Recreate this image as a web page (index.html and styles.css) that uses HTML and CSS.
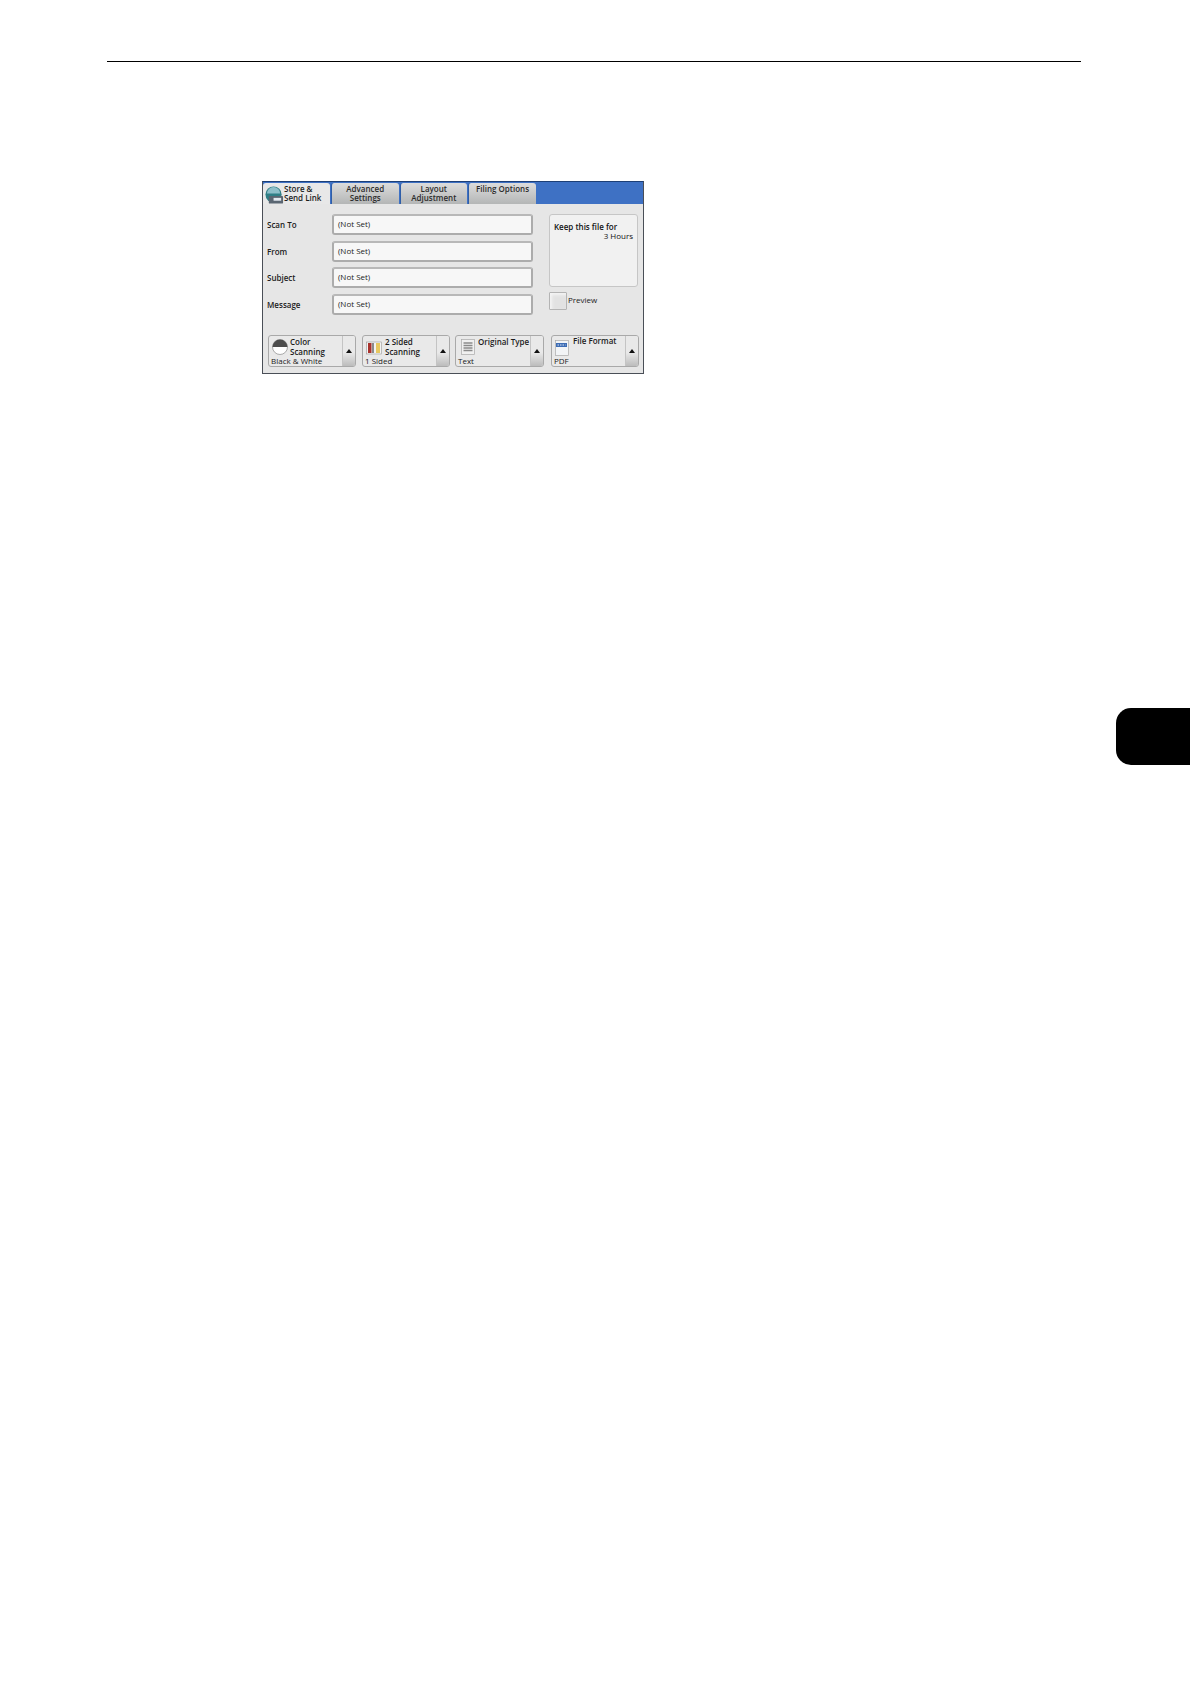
FILE: index.html
```html
<!DOCTYPE html>
<html lang="en">
<head>
<meta charset="utf-8">
<title>Store &amp; Send Link</title>
<link rel="stylesheet" href="styles.css">
</head>
<body>
<div class="rule"></div>
<div class="panel">
  <div class="tabbar">
    <div class="tab tab-active">
      <svg class="tab-icon" viewBox="0 0 20 20"><circle cx="9" cy="9" r="8.5" fill="#2f7f86"/><path d="M2 8a7 7 0 0 1 14 0z" fill="#8dbfc9"/><rect x="4" y="10.5" width="15" height="8" rx="1" fill="#5a6672"/><rect x="9" y="12.5" width="8" height="3" fill="#e4eaf0"/></svg>
      <span class="tab-text-left">Store &amp;<br>Send Link</span>
    </div>
    <div class="tab tab-2">Advanced<br>Settings</div>
    <div class="tab tab-3">Layout<br>Adjustment</div>
    <div class="tab tab-4">Filing Options</div>
  </div>
  <div class="body">
    <div class="top">
      <div class="fields">
        <div class="row"><span class="label">Scan To</span><div class="input">(Not Set)</div></div>
        <div class="row"><span class="label">From</span><div class="input">(Not Set)</div></div>
        <div class="row"><span class="label">Subject</span><div class="input">(Not Set)</div></div>
        <div class="row"><span class="label">Message</span><div class="input">(Not Set)</div></div>
      </div>
      <div class="side">
        <div class="keep">
          <div class="keep-a">Keep this file for</div>
          <div class="keep-b">3 Hours</div>
        </div>
        <div class="preview"><span class="check"></span><span class="preview-text">Preview</span></div>
      </div>
    </div>
    <div class="buttons">
      <div class="btn b1">
        <div class="btn-main">
          <svg class="ic-color" viewBox="0 0 16 16"><circle cx="8" cy="8" r="7.5" fill="#fff" stroke="#777" stroke-width=".6"/><path d="M.5 8a7.5 7.5 0 0 1 15 0z" fill="#4d4d4d"/></svg>
          <div class="btn-title t-color">Color<br><span class="ind">Scanning</span></div>
          <div class="btn-value">Black &amp; White</div>
        </div>
        <div class="arrow"><i></i></div>
      </div>
      <div class="btn b2">
        <div class="btn-main">
          <svg class="ic-sided" viewBox="0 0 16 14"><rect x=".5" y="1" width="15" height="12" fill="#f3f3f3" stroke="#999" stroke-width=".6"/><rect x="2" y="2" width="3.5" height="10" fill="#a8322d"/><rect x="6" y="2" width="2" height="10" fill="#8a8a8a"/><rect x="10" y="2" width="4" height="10" fill="#e8c860"/></svg>
          <div class="btn-title t-sided">2 Sided<br>Scanning</div>
          <div class="btn-value">1 Sided</div>
        </div>
        <div class="arrow"><i></i></div>
      </div>
      <div class="btn b3">
        <div class="btn-main">
          <svg class="ic-type" viewBox="0 0 14 16"><rect x=".5" y=".5" width="13" height="15" fill="#f0f0f0" stroke="#aaa" stroke-width=".7"/><path d="M2.5 4h9M2.5 6.5h9M2.5 9h9M2.5 11.5h9" stroke="#8a8a8a" stroke-width="1.3"/></svg>
          <div class="btn-title t-type">Original Type</div>
          <div class="btn-value">Text</div>
        </div>
        <div class="arrow"><i></i></div>
      </div>
      <div class="btn b4">
        <div class="btn-main">
          <svg class="ic-format" viewBox="0 0 14 16"><rect x=".5" y=".5" width="13" height="15" fill="#f2f4f6" stroke="#aaa" stroke-width=".7"/><rect x="1" y="3" width="11" height="4" fill="#3d6cb4"/><path d="M2.5 5h8" stroke="#dfe8f5" stroke-width="1" stroke-dasharray="1.5 1"/></svg>
          <div class="btn-title t-format">File Format</div>
          <div class="btn-value">PDF</div>
        </div>
        <div class="arrow"><i></i></div>
      </div>
    </div>
  </div>
</div>
<div class="thumb"></div>
</body>
</html>
```
FILE: styles.css
```css
* { box-sizing: border-box; }
html, body { margin: 0; padding: 0; background: #fff; }
body {
  width: 1190px;
  height: 1684px;
  overflow: hidden;
  position: relative;
  font-family: "Open Sans", "Noto Sans", sans-serif;
  font-size: 8px;
  color: #1c1c1c;
}
.rule { margin: 61px 0 0 107px; width: 974px; height: 1px; background: #000; }
.panel {
  margin: 119px 0 0 262px;
  width: 382px;
  height: 193px;
  border: 1px solid #4a4f57;
  border-top-color: #1d3f76;
  background: #e6e6e6;
  display: flex;
  flex-direction: column;
}
.tabbar {
  height: 22px;
  flex: none;
  background: #3e71c4;
  padding: 1px 0 0 0;
  display: flex;
  font-weight: 600;
}
.tab {
  height: 21px;
  background: linear-gradient(#dcdcdc, #b4b6b6);
  border-radius: 3px 3px 0 0;
  text-align: center;
  line-height: 9.6px;
  padding-top: 0.5px;
  color: #2c2c2c;
  border-left: 1px solid #2f5ea8;
}
.tab-active {
  width: 67px;
  background: #e8e8e8;
  display: flex;
  text-align: left;
  color: #1c1c1c;
  border-left: 0;
}
.tab-icon { width: 19px; height: 19px; margin: 2px 0 0 2px; flex: none; }
.tab-text-left { margin-left: 0; }
.tab-2 { width: 67.5px; margin-left: 1px; }
.tab-3 { width: 67.5px; margin-left: 1px; }
.tab-4 { width: 68px; margin-left: 1px; }
.body { flex: 1; padding: 10px 5px 0 4px; display: flex; flex-direction: column; }
.top { display: flex; height: 121px; }
.fields { display: flex; flex-direction: column; gap: 5.7px; width: 266px; }
.row { display: flex; align-items: center; height: 21px; }
.label { width: 65px; font-weight: 600; color: #1c1c1c; flex: none; }
.input {
  width: 201px;
  flex: none;
  height: 21px;
  background: #f7f7f7;
  border: 2px solid #acacac;
  border-radius: 3px;
  border-top-color: #b8b8b8;
  line-height: 16px;
  padding-left: 4px;
  color: #222;
}
.side { margin-left: 16px; width: 89px; }
.keep {
  height: 73px;
  background: #f1f1f1;
  border: 1px solid #c6c6c6;
  border-radius: 3px;
  padding: 7px 4px 0 4px;
  line-height: 9px;
  color: #111;
}
.keep-a { font-weight: 600; }
.keep-b { text-align: right; }
.preview { display: flex; align-items: flex-start; margin-top: 5px; }
.check {
  width: 18px;
  height: 18px;
  background: #e2e2e2;
  border: 1px solid #b4b4b4;
  border-radius: 1px;
  box-shadow: inset 2px 2px 3px #f4f4f4;
}
.preview-text { margin-left: 1px; line-height: 16px; color: #222; }
.buttons { display: flex; }
.btn {
  flex: none;
  height: 32px;
  width: 88px;
  background: #e9e9e9;
  border: 1px solid #a9a9a9;
  border-radius: 3px;
  display: flex;
  overflow: hidden;
}
.b1 { margin-left: 1px; }
.b2 { margin-left: 6px; }
.b3 { margin-left: 5px; width: 89px; }
.b4 { margin-left: 7px; }
.btn-main { flex: 1; position: relative; }
.arrow {
  width: 13px;
  flex: none;
  border-left: 1px solid #c4c4c4;
  background: linear-gradient(#e9e9e9 55%, #bcbcbc);
  display: flex;
  align-items: center;
  justify-content: center;
}
.arrow i {
  width: 0;
  height: 0;
  border-left: 3.5px solid transparent;
  border-right: 3.5px solid transparent;
  border-bottom: 4px solid #111;
}
.btn-title { position: absolute; top: 1px; line-height: 9.6px; color: #1c1c1c; font-weight: 600; }
.btn-value { position: absolute; left: 2px; bottom: 0; line-height: 10px; color: #222; }
.ind { margin-left: 0; }
.t-color { left: 21px; }
.t-sided { left: 22px; }
.t-type { left: 22px; }
.t-format { left: 21px; top: 0; }
.ic-color { position: absolute; left: 3px; top: 3px; width: 16px; height: 16px; }
.ic-sided { position: absolute; left: 3px; top: 5px; width: 16px; height: 14px; }
.ic-type { position: absolute; left: 5px; top: 3px; width: 14px; height: 16px; }
.ic-format { position: absolute; left: 3px; top: 4px; width: 14px; height: 16px; }
.thumb {
  position: absolute;
  left: 1116px;
  top: 708px;
  width: 74px;
  height: 57px;
  background: #000;
  border-radius: 15px 0 0 15px;
}
```
